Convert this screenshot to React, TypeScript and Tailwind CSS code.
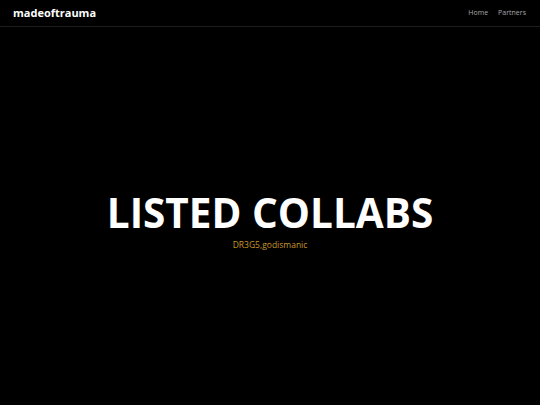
export default function App() {
  return (
    <div className="flex h-[405px] w-full flex-col bg-black font-['Open_Sans',sans-serif]">
      <header className="flex h-[27px] shrink-0 items-center justify-between border-b border-[#1c1c1c] pl-[13px] pr-[14px]">
        <a className="text-[11px] font-bold text-white">madeoftrauma</a>
        <nav className="flex items-center gap-[10px] text-[7px] text-[#a8a8a8]">
          <a>Home</a>
          <a>Partners</a>
        </nav>
      </header>

      <main className="flex flex-1 flex-col items-center justify-center pt-[8px]">
        <h1 className="text-[40.5px] font-bold leading-[46px] text-white">LISTED COLLABS</h1>
        <p className="mt-[3px] text-[8.5px] leading-[12px] text-[#c9972a]">DR3G5,godismanic</p>
      </main>
    </div>
  );
}
